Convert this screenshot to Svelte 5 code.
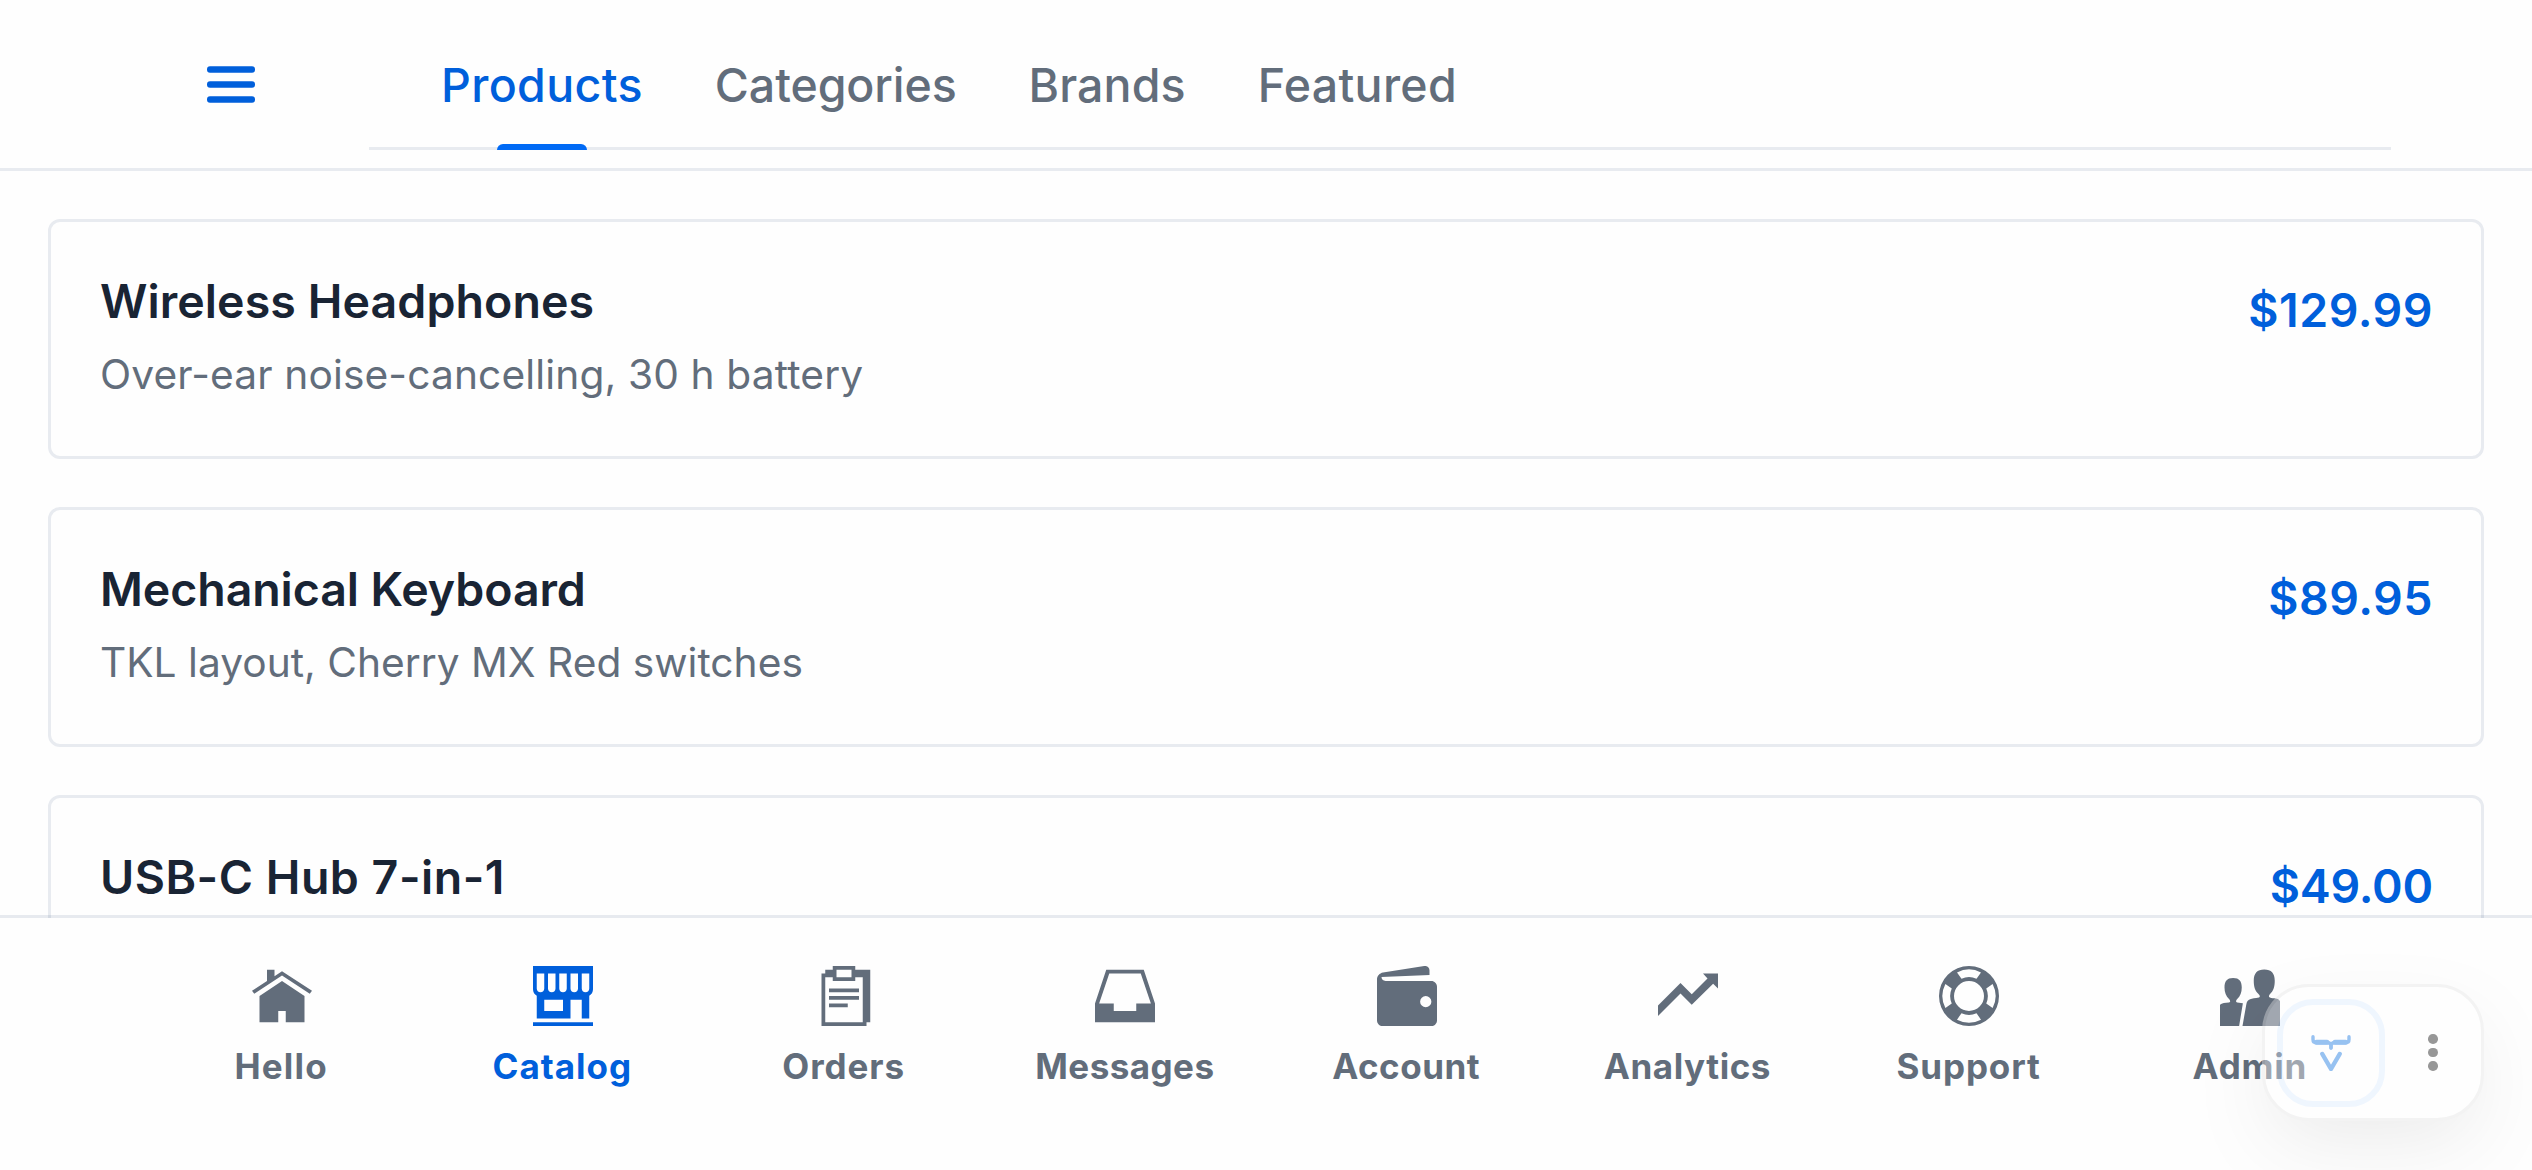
<script lang="ts">
  interface Tab {
    id: string;
    label: string;
    tracking: number;
  }

  interface Product {
    name: string;
    description?: string;
    price: string;
    tracking: number;
    descriptionTracking?: number;
    priceTracking: number;
  }

  interface NavItem {
    id: string;
    label: string;
    path: string;
    tracking: number;
  }

  const tabs: Tab[] = [
    { id: 'products', label: 'Products', tracking: 0.35 },
    { id: 'categories', label: 'Categories', tracking: -0.1 },
    { id: 'brands', label: 'Brands', tracking: 0.1 },
    { id: 'featured', label: 'Featured', tracking: 0.3 }
  ];

  const products: Product[] = [
    {
      name: 'Wireless Headphones',
      description: 'Over-ear noise-cancelling, 30 h battery',
      price: '$129.99',
      tracking: 0.08,
      descriptionTracking: 0.13,
      priceTracking: 0.5
    },
    {
      name: 'Mechanical Keyboard',
      description: 'TKL layout, Cherry MX Red switches',
      price: '$89.95',
      tracking: -0.08,
      descriptionTracking: 0.01,
      priceTracking: 0.5
    },
    {
      name: 'USB-C Hub 7-in-1',
      price: '$49.00',
      tracking: 0.5,
      priceTracking: -0.2
    }
  ];

  // Icons are drawn on a 16x16 grid
  const navItems: NavItem[] = [
    {
      id: 'hello',
      label: 'Hello',
      tracking: 1.2,
      path: 'M8 1.4l-2 1.3v-1.7h-2v3l-4 2.6 0.6 0.8 7.4-4.9 7.4 4.9 0.6-0.8zM8 4l-6 4v7h5v-3h2v3h5v-7z'
    },
    {
      id: 'catalog',
      label: 'Catalog',
      tracking: 1,
      path: 'M0 15h16v1h-16zM0 0v6.2c0 .8.4 1.4 1 1.7v6.1h9v-5h3v5h2v-6.1c.6-.3 1-.9 1-1.7v-6.200zM8 12h-5v-3h5zM3 6c0 .6-.4 1-1 1s-1-.4-1-1v-4h2zM6 6c0 .6-.4 1-1 1s-1-.4-1-1v-4h2zM9 6c0 .6-.4 1-1 1s-1-.4-1-1v-4h2zM12 6c0 .6-.4 1-1 1s-1-.4-1-1v-4h2zM15 6c0 .6-.4 1-1 1s-1-.4-1-1v-4h2z'
    },
    {
      id: 'orders',
      label: 'Orders',
      tracking: 0.9,
      path: 'M4 6h8v1h-8zM4 8h8v1h-8zM4 10h5v1h-5zM11 1v-1h-6v1h-2v1h-1v14h12v-1h1v-14zM6 1h4v2h-4zM13 15h-10v-12h2v1h6v-1h2z'
    },
    {
      id: 'messages',
      label: 'Messages',
      tracking: 0.45,
      path: 'M13 1h-10l-3 9v5h16v-5zM11 10v2h-6v-2h-3.900l2.700-8h8.400l2.700 8z'
    },
    {
      id: 'account',
      label: 'Account',
      tracking: 0.5,
      path: 'M14.500 4H2.300c-.7 0-1.100-.5-1.100-1.050L14 2.400V1.200C14 .4 13.400-.1 12.600 0L1.600 1.700C.7 1.900 0 2.600 0 3.500v11C0 15.300.7 16 1.500 16h13c.8 0 1.500-.7 1.500-1.500v-9C16 4.700 15.300 4 14.500 4zM13 11a1.500 1.500 0 1 1 0-3 1.500 1.500 0 0 1 0 3z'
    },
    {
      id: 'analytics',
      label: 'Analytics',
      tracking: 0.55,
      path: 'M12 2l1.200 1.300-4.200 4.200-3-3-6 6v2.800l6-6 3 3 5.700-5.600 1.300 1.300v-4z'
    },
    {
      id: 'support',
      label: 'Support',
      tracking: 0.9,
      path: 'M8 0a8 8 0 1 0 0 16 8 8 0 1 0 0-16zM8 12a4 4 0 1 1 0-8 4 4 0 0 1 0 8zM4.800 1.700A7 7 0 0 1 11.200 1.700L10 3.400A5 5 0 0 0 6 3.400zM14.300 4.800A7 7 0 0 1 14.300 11.200L12.600 10A5 5 0 0 0 12.600 6zM11.200 14.300A7 7 0 0 1 4.800 14.300L6 12.600A5 5 0 0 0 10 12.600zM1.700 11.200A7 7 0 0 1 1.700 4.800L3.400 6A5 5 0 0 0 3.400 10z'
    },
    {
      id: 'admin',
      label: 'Admin',
      tracking: 0.8,
      path: 'M2.400 9.700c.5-.1.3-.6 0-.9C1.600 8 1.200 7 1.200 5.700c0-1.600.6-2.500 2.300-2.500s2.300.9 2.300 2.500c0 1.300-.4 2.300-1.200 3.100-.3.300-.5.800 0 .9l1.500.2L5.100 16H0v-5.700c.5-.5 1.400-.5 2.400-.6zM10.400 8.400c.4-.2.200-.6-.2-1C9.300 6.500 9 5.400 9 3.900 9 1.900 9.900.9 11.800.9s2.800 1 2.800 3c0 1.500-.3 2.600-1.200 3.500-.4.400-.5.800-.1 1 .9.4 2.300 0 2.700 1V16H6l1-5.700c.3-1.700 1.300-1.500 3.400-1.900z'
    }
  ];

  let activeTab = $state('products');
  let activeNav = $state('catalog');
</script>

<div class="app">
  <header class="topbar">
    <button class="menu-button" aria-label="Menu">
      <svg viewBox="0 0 48 48">
        <rect x="0" y="6.300" width="48" height="6.400" rx="3" />
        <rect x="0" y="21.300" width="48" height="6.400" rx="3" />
        <rect x="0" y="36.300" width="48" height="6.400" rx="3" />
      </svg>
    </button>
    <nav class="tabs">
      {#each tabs as tab (tab.id)}
        <button
          class="tab"
          class:active={activeTab === tab.id}
          style="letter-spacing: {tab.tracking}px"
          onclick={() => (activeTab = tab.id)}
        >
          {tab.label}
        </button>
      {/each}
    </nav>
  </header>

  <main class="content">
    {#each products as product (product.name)}
      <article class="card">
        <div class="card-text">
          <h3 style="letter-spacing: {product.tracking}px">{product.name}</h3>
          {#if product.description}
            <p style="letter-spacing: {product.descriptionTracking}px">{product.description}</p>
          {/if}
        </div>
        <span class="price" style="letter-spacing: {product.priceTracking}px">{product.price}</span>
      </article>
    {/each}
  </main>

  <nav class="bottom-nav">
    {#each navItems as item (item.id)}
      <button class="nav-item" class:active={activeNav === item.id} onclick={() => (activeNav = item.id)}>
        <svg viewBox="0 0 16 16"><path fill-rule="evenodd" d={item.path} /></svg>
        <span style="letter-spacing: {item.tracking}px">{item.label}</span>
      </button>
    {/each}
  </nav>

  <div class="dev-tools">
    <div class="dev-logo">
      <svg viewBox="0 0 40 36" fill="none" stroke-linecap="round" stroke-linejoin="round">
        <path stroke-width="3.400" d="M2 1.700v2.800q0 3.200 3.200 3.200H16.500Q20 7.700 20 10.500V13" />
        <path stroke-width="3.400" d="M38 1.700v2.800q0 3.200-3.200 3.200H23.500Q20 7.700 20 10.500V13" />
        <path stroke-width="5" d="M5.500 7.300H16M34.500 7.300H24" />
        <path stroke-width="4.400" d="M11.300 19L20 34L28.700 19" />
      </svg>
    </div>
    <div class="dots">
      <i></i>
      <i></i>
      <i></i>
    </div>
  </div>
</div>

<style>
  .app {
    --primary: #005fdb;
    --primary-strong: #006af5;
    --text: #192434;
    --text-light: #626d7b;
    --border: #e8ebf0;
    position: relative;
    height: 1170px;
    display: flex;
    flex-direction: column;
    overflow: hidden;
    background: #fefefe;
    color: var(--text);
    font-family: Inter, sans-serif;
  }

  button {
    background: none;
    border: none;
    padding: 0;
    font: inherit;
    color: inherit;
    cursor: pointer;
  }

  .topbar {
    flex: none;
    height: 168px;
    display: flex;
    align-items: flex-start;
    padding: 0 141px;
    border-bottom: 3px solid var(--border);
  }

  .menu-button {
    width: 180px;
    height: 48px;
    margin: 60px 48px 0 0;
    display: flex;
    justify-content: center;
  }

  .menu-button svg {
    width: 48px;
    height: 48px;
    fill: var(--primary);
  }

  .tabs {
    flex: 1;
    height: 147px;
    display: flex;
    gap: 72px;
    padding-left: 72px;
    border-bottom: 3px solid var(--border);
  }

  .tab {
    position: relative;
    box-sizing: border-box;
    height: 150px;
    padding: 55px 0 35px;
    font-size: 46.5px;
    font-weight: 500;
    line-height: 60px;
    color: var(--text-light);
  }

  .tab.active {
    color: var(--primary);
  }

  .tab.active::after {
    content: '';
    position: absolute;
    bottom: 0;
    left: 50%;
    width: 90px;
    height: 6px;
    margin-left: -45px;
    border-radius: 6px 6px 0 0;
    background: var(--primary-strong);
  }

  .content {
    flex: 1;
    min-height: 0;
    display: flex;
    flex-direction: column;
    gap: 48px;
    padding: 48px 48px 0;
    overflow: hidden;
  }

  .card {
    flex: none;
    box-sizing: border-box;
    height: 240px;
    display: flex;
    justify-content: space-between;
    padding: 49px 48px 0 49px;
    border: 3px solid var(--border);
    border-radius: 12px;
  }

  h3 {
    margin: 0;
    font-size: 46.5px;
    font-weight: 600;
    line-height: 60px;
  }

  .card-text p {
    margin: 14px 0 0;
    font-size: 40.7px;
    line-height: 60px;
    color: var(--text-light);
  }

  .price {
    margin-top: 9px;
    font-size: 46.5px;
    font-weight: 600;
    line-height: 60px;
    color: var(--primary);
  }

  /* The translucent top border lies over the last visible card */
  .bottom-nav {
    position: relative;
    flex: none;
    height: 252px;
    margin-top: -3px;
    display: grid;
    grid-template-columns: repeat(8, 1fr);
    padding: 0 141px;
    border-top: 3px solid rgb(25 59 103 / 0.1);
    background: #fefefe;
    background-clip: padding-box;
  }

  .nav-item {
    display: flex;
    flex-direction: column;
    align-items: center;
    gap: 16px;
    padding-top: 48px;
    color: var(--text-light);
  }

  .nav-item.active {
    color: var(--primary);
  }

  .nav-item svg {
    width: 60px;
    height: 60px;
    fill: currentColor;
  }

  .nav-item span {
    margin-right: 1px;
    font-size: 35px;
    font-weight: 700;
    line-height: 48px;
  }

  /* Floating widget in the corner, faded while idle */
  .dev-tools {
    position: absolute;
    right: 48px;
    bottom: 49px;
    box-sizing: border-box;
    width: 222px;
    height: 137px;
    display: flex;
    align-items: center;
    padding-left: 12px;
    border: 3px solid #e4e4e4;
    border-radius: 47px;
    background: #fff;
    box-shadow: 0 30px 75px -12px rgb(0 0 0 / 0.18);
    opacity: 0.4;
  }

  .dev-logo {
    box-sizing: border-box;
    width: 108px;
    height: 108px;
    display: flex;
    align-items: center;
    justify-content: center;
    border: 6px solid #dbebff;
    border-radius: 36px;
  }

  .dev-logo svg {
    width: 40px;
    height: 36px;
    stroke: #0069e0;
  }

  .dots {
    display: flex;
    flex-direction: column;
    gap: 4px;
    margin-left: 43px;
  }

  .dots i {
    width: 9.500px;
    height: 9.500px;
    border-radius: 50%;
    background: #000;
  }
</style>
